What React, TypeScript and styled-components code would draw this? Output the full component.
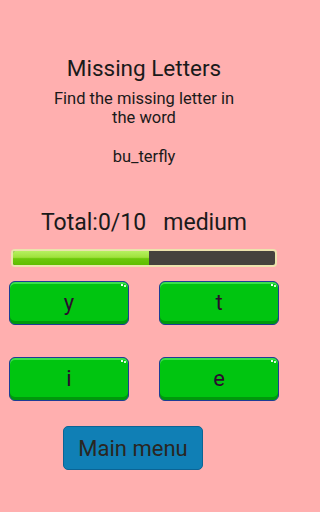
import React from "react";
import styled, { createGlobalStyle } from "styled-components";

const GlobalStyle = createGlobalStyle`
  html, body {
    margin: 0;
    padding: 0;
    background: #ffafaf;
  }
  body {
    font-family: Roboto, "Noto Sans", sans-serif;
    color: #1c1c1c;
  }
`;

const Screen = styled.div`
  width: 288px;
  height: 512px;
  display: flex;
  flex-direction: column;
  align-items: center;
  background: #ffafaf;
  overflow: hidden;
`;

const Title = styled.h1`
  margin: 55px 0 0;
  font-size: 22.5px;
  line-height: 26px;
  font-weight: 400;
  color: #1a1a1a;
`;

const Subtitle = styled.p`
  margin: 8px 0 0;
  width: 200px;
  font-size: 16.5px;
  line-height: 19px;
  text-align: center;
  color: #1a1a1a;
`;

const Word = styled.div`
  margin-top: 20px;
  font-size: 16.5px;
  line-height: 20px;
  color: #1a1a1a;
`;

const Score = styled.div`
  margin-top: 42px;
  font-size: 23px;
  line-height: 28px;
  color: #1a1a1a;
  white-space: pre;
`;

const Bar = styled.div`
  margin-top: 12px;
  align-self: flex-start;
  margin-left: 11px;
  width: 266px;
  height: 18px;
  box-sizing: border-box;
  border: 2px solid #ece3ad;
  border-radius: 4px;
  background: #45423d;
  overflow: hidden;
  display: flex;
`;

const Fill = styled.div`
  height: 100%;
  background: linear-gradient(
    to bottom,
    #b6f060 0%,
    #9fe23c 45%,
    #6cc80a 55%,
    #5fbe00 100%
  );
`;

const Choices = styled.div`
  margin-top: 14px;
  width: 100%;
  box-sizing: border-box;
  padding: 0 9px;
  display: grid;
  grid-template-columns: 120px 120px;
  grid-auto-rows: 44px;
  row-gap: 32px;
  justify-content: space-between;
`;

const Choice = styled.button`
  position: relative;
  box-sizing: border-box;
  border: 1px solid #1d3c96;
  border-radius: 6px;
  background: #00c510;
  box-shadow: inset 0 2px 0 #3ae04a, inset 0 -3px 0 #00990c;
  font-family: Roboto, "Noto Sans", sans-serif;
  font-size: 22px;
  color: #2b0c2e;
  padding: 0 0 2px;
  cursor: pointer;

  &::after {
    content: "";
    position: absolute;
    top: 2px;
    right: 5px;
    width: 2px;
    height: 2px;
    background: #e8ffe8;
    box-shadow: 3px 1px 0 #d0f8d0;
  }
`;

const MenuButton = styled.button`
  margin-top: 25px;
  align-self: flex-start;
  margin-left: 63px;
  width: 140px;
  height: 44px;
  box-sizing: border-box;
  border: 1px solid #0b6495;
  border-radius: 5px;
  background: #107fb5;
  font-family: Roboto, "Noto Sans", sans-serif;
  font-size: 22px;
  color: #2a2622;
  padding: 0;
  cursor: pointer;
`;

const letters = ["y", "t", "i", "e"];
const total = 0;
const progress = 136 / 262;

export default function App() {
  return (
    <>
      <GlobalStyle />
      <Screen>
        <Title>Missing Letters</Title>
        <Subtitle>Find the missing letter in the word</Subtitle>
        <Word>bu_terfly</Word>
        <Score>{`Total:${total}/10   medium`}</Score>
        <Bar>
          <Fill style={{ width: `${progress * 100}%` }} />
        </Bar>
        <Choices>
          {letters.map((l) => (
            <Choice key={l}>{l}</Choice>
          ))}
        </Choices>
        <MenuButton>Main menu</MenuButton>
      </Screen>
    </>
  );
}
